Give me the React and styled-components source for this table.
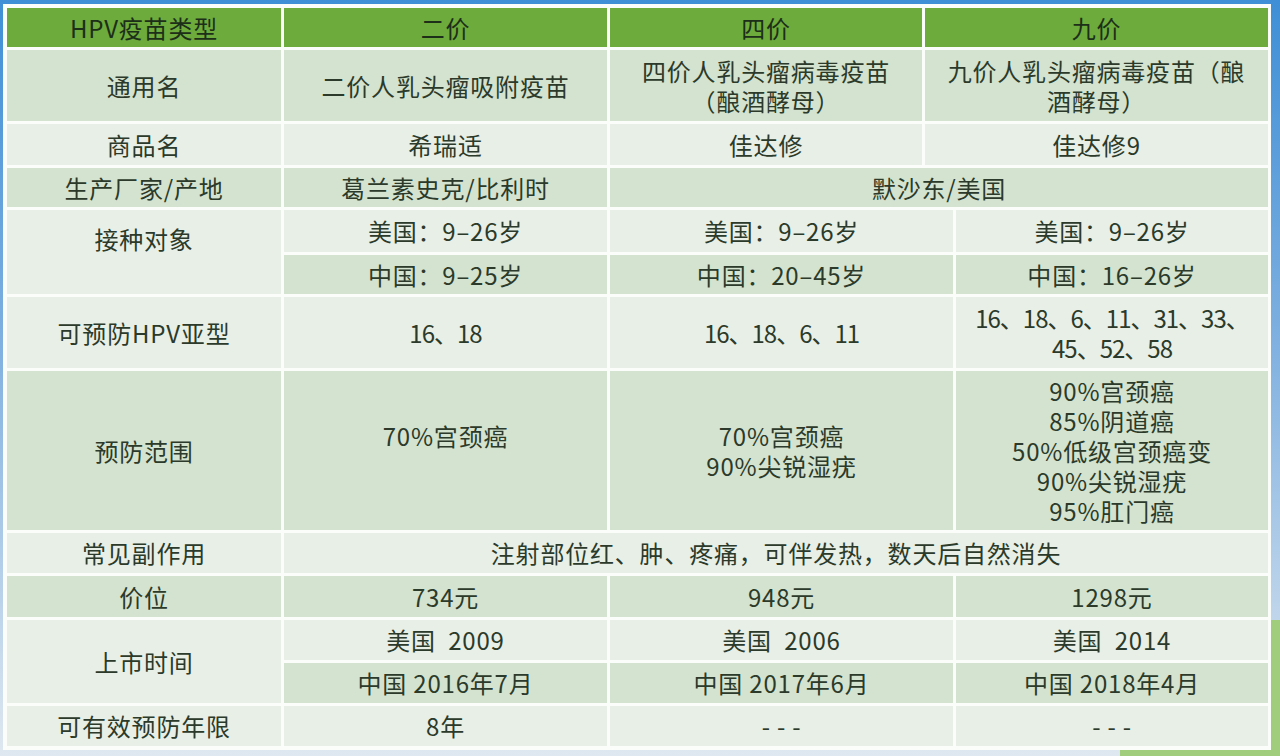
import React from "react";
import styled, { createGlobalStyle } from "styled-components";

const GlobalStyle = createGlobalStyle`
  html, body { margin: 0; padding: 0; }
  body { font-family: "Noto Sans CJK SC", "Noto Sans", sans-serif; }
`;

const tones = {
  head: "#6cab3c",
  dark: "#d4e3cf",
  light: "#e8efe7",
};

const Page = styled.div`
  width: 1280px;
  height: 756px;
  box-sizing: border-box;
  padding: 4px 9px 6px 3px;
  background:
    linear-gradient(#9fcd7b, #9fcd7b) right bottom / 160px 136px no-repeat,
    linear-gradient(180deg, #3f8fd6 0%, #7fb0e0 45%, #dfe8f0 100%);
`;

const Panel = styled.div`
  height: 100%;
  box-sizing: border-box;
  background: #fbfdfb;
  padding: 4px 3px 0 4px;
  display: flex;
  flex-direction: column;
  gap: 3px;
`;

const Grid = styled.div`
  display: grid;
  grid-template-columns: ${(p) => p.$cols};
  grid-template-rows: ${(p) => p.$rows};
  gap: 3px;
`;

const Cell = styled.div`
  grid-column: ${(p) => p.$col || "auto"};
  grid-row: ${(p) => p.$row || "auto"};
  display: flex;
  align-items: center;
  justify-content: center;
  text-align: center;
  padding: 0 8px ${(p) => p.$lift || 0}px;
  background: ${(p) => tones[p.$tone || "light"]};
  color: #2b3a2a;
  font-size: 24px;
  line-height: 30px;
  letter-spacing: ${(p) => (p.$tight ? "-1px" : "0.8px")};
  text-spacing-trim: space-all;
  white-space: nowrap;
`;

const HeadCell = styled(Cell)`
  background: ${tones.head};
  color: #1d2e19;
`;

export default function App() {
  return (
    <>
      <GlobalStyle />
      <Page>
        <Panel>
          <Grid $cols="274px 323px 312px 343px" $rows="39px 71px 41px 39px">
            <HeadCell>HPV疫苗类型</HeadCell>
            <HeadCell>二价</HeadCell>
            <HeadCell>四价</HeadCell>
            <HeadCell>九价</HeadCell>

            <Cell $tone="dark">通用名</Cell>
            <Cell $tone="dark">二价人乳头瘤吸附疫苗</Cell>
            <Cell $tone="dark">四价人乳头瘤病毒疫苗<br />（酿酒酵母）</Cell>
            <Cell $tone="dark">九价人乳头瘤病毒疫苗（酿<br />酒酵母）</Cell>

            <Cell>商品名</Cell>
            <Cell>希瑞适</Cell>
            <Cell>佳达修</Cell>
            <Cell>佳达修9</Cell>

            <Cell $tone="dark">生产厂家/产地</Cell>
            <Cell $tone="dark">葛兰素史克/比利时</Cell>
            <Cell $tone="dark" $col="span 2">默沙东/美国</Cell>
          </Grid>

          <Grid
            $cols="274px 323px 343px 312px"
            $rows="42px 39px 71px 159px 40px 41px 40px 40px 40px"
          >
            <Cell $row="span 2" $lift={26}>接种对象</Cell>
            <Cell>美国：9–26岁</Cell>
            <Cell>美国：9–26岁</Cell>
            <Cell>美国：9–26岁</Cell>
            <Cell $tone="dark">中国：9–25岁</Cell>
            <Cell $tone="dark">中国：20–45岁</Cell>
            <Cell $tone="dark">中国：16–26岁</Cell>

            <Cell>可预防HPV亚型</Cell>
            <Cell $tight>16、18</Cell>
            <Cell $tight>16、18、6、11</Cell>
            <Cell $tight>16、18、6、11、31、33、<br />45、52、58</Cell>

            <Cell $tone="dark">预防范围</Cell>
            <Cell $tone="dark" $lift={30}>70%宫颈癌</Cell>
            <Cell $tone="dark">70%宫颈癌<br />90%尖锐湿疣</Cell>
            <Cell $tone="dark">
              90%宫颈癌<br />85%阴道癌<br />50%低级宫颈癌变<br />90%尖锐湿疣<br />95%肛门癌
            </Cell>

            <Cell>常见副作用</Cell>
            <Cell $col="span 3">注射部位红、肿、疼痛，可伴发热，数天后自然消失</Cell>

            <Cell $tone="dark">价位</Cell>
            <Cell $tone="dark">734元</Cell>
            <Cell $tone="dark">948元</Cell>
            <Cell $tone="dark">1298元</Cell>

            <Cell $row="span 2">上市时间</Cell>
            <Cell>美国&nbsp;&nbsp;2009</Cell>
            <Cell>美国&nbsp;&nbsp;2006</Cell>
            <Cell>美国&nbsp;&nbsp;2014</Cell>
            <Cell $tone="dark">中国 2016年7月</Cell>
            <Cell $tone="dark">中国 2017年6月</Cell>
            <Cell $tone="dark">中国 2018年4月</Cell>

            <Cell>可有效预防年限</Cell>
            <Cell>8年</Cell>
            <Cell>- - -</Cell>
            <Cell>- - -</Cell>
          </Grid>
        </Panel>
      </Page>
    </>
  );
}
